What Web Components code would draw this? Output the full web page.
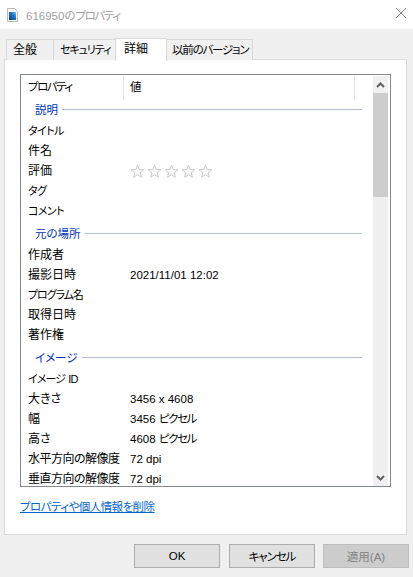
<!DOCTYPE html>
<html lang="ja">
<head>
<meta charset="utf-8">
<title>616950のプロパティ</title>
<style>
  html, body { margin: 0; padding: 0; height: 100%; }
  body {
    font: 11.5px "Liberation Sans", "Noto Sans CJK JP", sans-serif;
    font-feature-settings: "palt";
    color: #000;
    background: #f0f0f0;
    overflow: hidden;
  }
  .kana { letter-spacing: -1.1px; }
  .kana.tight { letter-spacing: -1.4px; }
  .narrow { --name-size: 11px; letter-spacing: -.6px; }
</style>
</head>
<body>
<prop-dialog>
  <title-bar slot="title">616950の<span class="kana tight">プロパティ</span></title-bar>
  <tab-item slot="tabs" style="width:48px;--pad:6px">全般</tab-item>
  <tab-item slot="tabs" style="width:63px;--pad:6px;font-size:11px;letter-spacing:-1.1px">セキュリティ</tab-item>
  <tab-item slot="tabs" style="width:52px;--pad:8px" active>詳細</tab-item>
  <tab-item slot="tabs" style="width:87px;--pad:5px;font-size:11.5px;letter-spacing:-1.2px">以前のバージョン</tab-item>

  <prop-list>
    <prop-group>説明</prop-group>
    <prop-row class="narrow" name="タイトル"></prop-row>
    <prop-row name="件名"></prop-row>
    <prop-row name="評価"><star-rating></star-rating></prop-row>
    <prop-row class="narrow" name="タグ"></prop-row>
    <prop-row class="narrow" name="コメント"></prop-row>
    <prop-group>元の場所</prop-group>
    <prop-row name="作成者"></prop-row>
    <prop-row name="撮影日時">2021/11/01 12:02</prop-row>
    <prop-row class="narrow" name="プログラム名" style="letter-spacing:-1.1px"></prop-row>
    <prop-row name="取得日時"></prop-row>
    <prop-row name="著作権"></prop-row>
    <prop-group>イメージ</prop-group>
    <prop-row class="narrow" name="イメージ ID" style="letter-spacing:-.9px;word-spacing:1px"></prop-row>
    <prop-row name="大きさ">3456 x 4608</prop-row>
    <prop-row name="幅">3456 <span class="kana tight">ピクセル</span></prop-row>
    <prop-row name="高さ">4608 <span class="kana tight">ピクセル</span></prop-row>
    <prop-row name="水平方向の解像度" style="--name-ls:-.5px">72 dpi</prop-row>
    <prop-row name="垂直方向の解像度" style="--name-ls:-.5px">72 dpi</prop-row>
  </prop-list>

  <a slot="link" href="#" style="color:#0066cc;letter-spacing:-.55px">プロパティや個人情報を削除</a>

  <dlg-button slot="buttons" style="margin-right:1px">OK</dlg-button>
  <dlg-button slot="buttons"><span class="kana">キャンセル</span></dlg-button>
  <dlg-button slot="buttons" disabled>適用(A)</dlg-button>
</prop-dialog>

<script>
class PropDialog extends HTMLElement {
  constructor() {
    super();
    this.attachShadow({ mode: 'open' });
    this.shadowRoot.innerHTML = `
      <style>
        :host { display: flex; flex-direction: column; height: 577px; }
        .tabs { display: flex; align-items: flex-end; height: 23px; margin: 8px 0 0 7px; position: relative; z-index: 1; }
        .panel {
          margin: -1px 6px 0 4px;
          height: 476px;
          box-sizing: border-box;
          background: #fff;
          border: 1px solid #d9d9d9;
          padding: 14px 15px 0;
          display: flex;
          flex-direction: column;
        }
        .link { margin-top: 11px; height: 18px; line-height: 18px; }
        .buttons { display: flex; justify-content: flex-end; gap: 8px; padding: 9px 4px 0 0; }
      </style>
      <slot name="title"></slot>
      <div class="tabs"><slot name="tabs"></slot></div>
      <div class="panel">
        <slot></slot>
        <div class="link"><slot name="link"></slot></div>
      </div>
      <div class="buttons"><slot name="buttons"></slot></div>
    `;
  }
}

class TitleBar extends HTMLElement {
  constructor() {
    super();
    this.attachShadow({ mode: 'open' });
    this.shadowRoot.innerHTML = `
      <style>
        :host { display: flex; align-items: center; height: 29px; background: #fff; color: #a0a0a0; }
        svg { display: block; }
        .icon { margin: 0 8px 0 7px; }
        .text { flex: 1; }
        .close { margin: 0 7px 3px 0; }
      </style>
      <svg class="icon" width="11" height="14" viewBox="0 0 11 14">
        <defs>
          <linearGradient id="pic" x1="0" y1="1" x2="1" y2="0">
            <stop offset="0" stop-color="#0b3f86"/>
            <stop offset=".6" stop-color="#1c78c8"/>
            <stop offset="1" stop-color="#7cc4f0"/>
          </linearGradient>
        </defs>
        <path d="M.5.5h7l3 3v10H.5z" fill="#fff" stroke="#b8b8b8"/>
        <rect x="2" y="4" width="7" height="8" fill="url(#pic)"/>
      </svg>
      <span class="text"><slot></slot></span>
      <svg class="close" width="10" height="10" viewBox="0 0 10 10">
        <path d="M0 0l10 10M10 0L0 10" stroke="#8a8a8a" fill="none"/>
      </svg>
    `;
  }
}

class TabItem extends HTMLElement {
  constructor() {
    super();
    this.attachShadow({ mode: 'open' });
    this.shadowRoot.innerHTML = `
      <style>
        :host {
          display: block;
          box-sizing: border-box;
          height: 21px;
          line-height: 20px;
          padding-left: var(--pad, 6px);
          margin-left: -1px;
          background: #f0f0f0;
          border: 1px solid #d9d9d9;
          border-bottom: 0;
          white-space: nowrap;
          font-size: 12px;
        }
        :host([active]) {
          height: 23px;
          line-height: 20px;
          background: #fff;
          position: relative;
          z-index: 1;
          margin-bottom: -1px;
        }
      </style>
      <slot></slot>
    `;
  }
}

class PropList extends HTMLElement {
  constructor() {
    super();
    this.attachShadow({ mode: 'open' });
    this.shadowRoot.innerHTML = `
      <style>
        :host {
          display: flex;
          height: 413px;
          box-sizing: border-box;
          border: 1px solid #828790;
          background: #fff;
          overflow: hidden;
        }
        .main { flex: 1; min-width: 0; overflow: hidden; }
        .head { display: flex; height: 21px; padding-top: 1px; }
        .head span { box-sizing: border-box; height: 24px; line-height: 22px; border-right: 1px solid #e5e5e5; }
        .head .n { width: 103px; padding-left: 7px; letter-spacing: -1.5px; }
        .head .v { width: 231px; padding-left: 6px; }
        .bar { width: 15px; margin: 1px 2px 0 0; background: #f0f0f0; display: flex; flex-direction: column; flex: none; }
        .arrow { height: 17px; display: flex; align-items: center; justify-content: center; flex: none; }
        .thumb { height: 104px; background: #cdcdcd; flex: none; }
        .track { flex: 1; }
      </style>
      <div class="main">
        <div class="head"><span class="n">プロパティ</span><span class="v">値</span></div>
        <slot></slot>
      </div>
      <div class="bar">
        <div class="arrow"><svg width="9" height="6" viewBox="0 0 9 6"><path d="M1 5l3.500-3.500L8 5" fill="none" stroke="#606060" stroke-width="2"/></svg></div>
        <div class="thumb"></div>
        <div class="track"></div>
        <div class="arrow"><svg width="9" height="6" viewBox="0 0 9 6"><path d="M1 1l3.500 3.500L8 1" fill="none" stroke="#606060" stroke-width="2"/></svg></div>
      </div>
    `;
  }
}

class PropGroup extends HTMLElement {
  constructor() {
    super();
    this.attachShadow({ mode: 'open' });
    this.shadowRoot.innerHTML = `
      <style>
        :host {
          display: flex;
          align-items: center;
          height: 24px;
          padding: 0 11px 0 14px;
          color: #0033bc;
        }
        .line { flex: 1; height: 1px; background: #b4bcd4; margin-left: 4px; }
      </style>
      <slot></slot><div class="line"></div>
    `;
  }
}

class PropRow extends HTMLElement {
  constructor() {
    super();
    this.attachShadow({ mode: 'open' });
    this.shadowRoot.innerHTML = `
      <style>
        :host { display: flex; height: 20px; line-height: 20px; white-space: nowrap; }
        .n { width: 102px; padding-left: 7px; box-sizing: border-box; flex: none; font-size: var(--name-size, 12px); letter-spacing: var(--name-ls, inherit); }
        .v { padding-left: 7px; display: flex; align-items: center; white-space: pre; }
      </style>
      <div class="n"></div>
      <div class="v"><slot></slot></div>
    `;
    this.shadowRoot.querySelector('.n').textContent = this.getAttribute('name');
  }
}

class StarRating extends HTMLElement {
  constructor() {
    super();
    this.attachShadow({ mode: 'open' });
    const star = `<svg width="15" height="15" viewBox="0 0 15 15"><path d="M7.500 1l1.700 4.500 4.800.2-3.800 3 1.300 4.700-4-2.700-4 2.700 1.300-4.700-3.800-3 4.800-.2z" fill="#f8f8f8" stroke="#cccccc"/></svg>`;
    this.shadowRoot.innerHTML = `
      <style>
        :host { display: flex; gap: 2px; }
        svg { display: block; }
      </style>
      ${star.repeat(5)}
    `;
  }
}

class DlgButton extends HTMLElement {
  constructor() {
    super();
    this.attachShadow({ mode: 'open' });
    this.shadowRoot.innerHTML = `
      <style>
        :host {
          display: flex;
          align-items: center;
          justify-content: center;
          box-sizing: border-box;
          width: 86px;
          height: 24px;
          background: #e1e1e1;
          border: 1px solid #adadad;
        }
        :host([disabled]) { background: #cccccc; border-color: #bfbfbf; color: #838383; }
      </style>
      <slot></slot>
    `;
  }
}

customElements.define('prop-dialog', PropDialog);
customElements.define('title-bar', TitleBar);
customElements.define('tab-item', TabItem);
customElements.define('prop-list', PropList);
customElements.define('prop-group', PropGroup);
customElements.define('prop-row', PropRow);
customElements.define('star-rating', StarRating);
customElements.define('dlg-button', DlgButton);
</script>
</body>
</html>
